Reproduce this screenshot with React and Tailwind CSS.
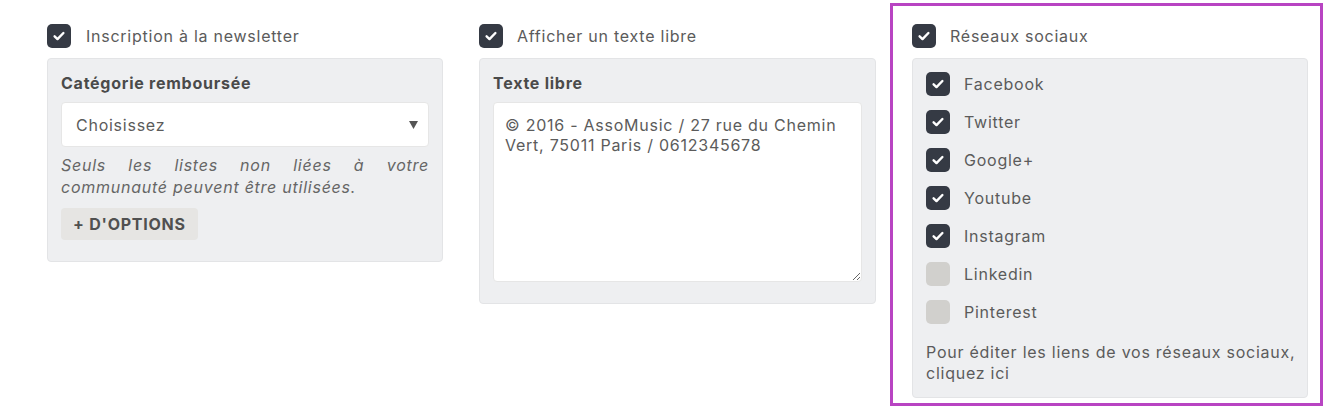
import React from "react";

function Box({ checked = true }) {
  return checked ? (
    <span className="flex h-[24px] w-[24px] shrink-0 items-center justify-center rounded-[5px] bg-[#353a44]">
      <svg width="16" height="16" viewBox="0 0 16 16" fill="none">
        <path d="M3.6 8.3l2.9 2.8L12.4 5" stroke="#ffffff" strokeWidth="2.4" strokeLinecap="round" strokeLinejoin="round" />
      </svg>
    </span>
  ) : (
    <span className="block h-[24px] w-[24px] shrink-0 rounded-[5px] bg-[#d1d0cd]" />
  );
}

function CheckRow({ label, checked = true, gap = "gap-[14px]" }) {
  return (
    <div className={`flex h-[24px] items-center ${gap}`}>
      <Box checked={checked} />
      <span className="leading-[24px] text-[#5b5b5b]">{label}</span>
    </div>
  );
}

export default function App() {
  const socials = [
    ["Facebook", true],
    ["Twitter", true],
    ["Google+", true],
    ["Youtube", true],
    ["Instagram", true],
    ["Linkedin", false],
    ["Pinterest", false],
  ];
  return (
    <div className="flex h-[415px] w-[1344px] items-start bg-white font-['Inter',sans-serif] text-[16px] tracking-[0.75px] text-[#5b5b5b]">
      <div className="ml-[47px] mt-[24px] w-[396px]">
        <CheckRow label="Inscription à la newsletter" gap="gap-[15px]" />
        <div className="mt-[10px] rounded-[4px] border border-[#e3e4e6] bg-[#eeeff1] px-[13px] pb-[21px] pt-[13px]">
          <div className="font-bold leading-[22px] text-[#4a4a4a]">Catégorie remboursée</div>
          <div className="mt-[8px] flex h-[45px] items-center justify-between rounded-[4px] border border-[#e6e6e6] bg-white pl-[14px] pr-[10px]">
            <span className="text-[#5b5b5b]">Choisissez</span>
            <svg width="9" height="8" viewBox="0 0 9 8">
              <path d="M0 0h9L4.5 8z" fill="#555555" />
            </svg>
          </div>
          <p className="mt-[7px] text-justify italic leading-[22px] text-[#666666]">
            Seuls les listes non liées à votre communauté peuvent être utilisées.
          </p>
          <button className="mt-[10px] flex h-[32px] items-center rounded-[4px] bg-[#e6e5e3] px-[12px] font-bold tracking-[0.75px] text-[#505050]">
            + D'OPTIONS
          </button>
        </div>
      </div>

      <div className="ml-[36px] mt-[24px] w-[397px]">
        <CheckRow label="Afficher un texte libre" />
        <div className="mt-[10px] rounded-[4px] border border-[#e3e4e6] bg-[#eeeff1] px-[13px] pb-[21px] pt-[13px]">
          <div className="font-bold leading-[22px] text-[#4a4a4a]">Texte libre</div>
          <textarea
            className="mt-[8px] block h-[180px] w-full rounded-[4px] border border-[#e6e6e6] bg-white px-[11px] py-[12px] leading-[20px] tracking-[0.75px] text-[#5b5b5b] outline-none"
            defaultValue={"© 2016 - AssoMusic / 27 rue du Chemin\nVert, 75011 Paris / 0612345678"}
          />
        </div>
      </div>

      <div className="ml-[14px] mt-[3px] h-[403px] w-[433px] border-[3px] border-[#b844c2] pl-[19px] pr-[12px] pt-[18px]">
        <CheckRow label="Réseaux sociaux" />
        <div className="mt-[10px] rounded-[4px] border border-[#e3e4e6] bg-[#eeeff1] pb-[13px] pl-[13px] pr-[8px] pt-[13px]">
          <div className="flex flex-col gap-[14px]">
            {socials.map(([name, checked]) => (
              <CheckRow key={name} label={name} checked={checked} />
            ))}
          </div>
          <p className="mt-[18px] leading-[21px] text-[#5b5b5b]">
            Pour éditer les liens de vos réseaux sociaux, cliquez ici
          </p>
        </div>
      </div>
    </div>
  );
}
